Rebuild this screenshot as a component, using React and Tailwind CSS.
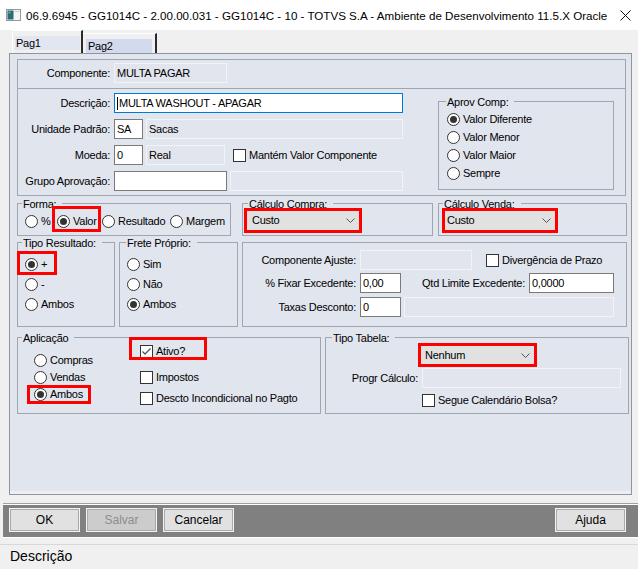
import React from "react";

function Radio({ checked }) {
  return (
    <span className="flex h-[13px] w-[13px] shrink-0 items-center justify-center rounded-full border border-[#333333] bg-white">
      {checked && <span className="h-[7px] w-[7px] rounded-full bg-[#333333]" />}
    </span>
  );
}

function Check({ checked }) {
  return (
    <span className="flex h-[13px] w-[13px] shrink-0 items-center justify-center border border-[#333333] bg-white">
      {checked && (
        <svg width="11" height="11" viewBox="0 0 11 11">
          <polyline points="1.5,5.5 4,8 9.5,2.5" fill="none" stroke="#555555" strokeWidth="1.3" />
        </svg>
      )}
    </span>
  );
}

function RO({ className = "", children }) {
  return (
    <div className={`flex h-[20px] shrink-0 items-center border border-[#f2f3f6] bg-[#e2e5ed] pl-[2px] ${className}`}>
      {children}
    </div>
  );
}

function TF({ className = "", children, focus }) {
  return (
    <div
      className={`flex h-[20px] shrink-0 items-center bg-white pl-[2px] ${
        focus ? "border border-[#0078d7]" : "border border-[#7a7a7a]"
      } ${className}`}
    >
      {children}
    </div>
  );
}

function Group({ className = "", legend, legendClass = "", children }) {
  return (
    <div className={`relative shrink-0 border border-[#a0a6b0] ${className}`}>
      {legend && (
        <span className={`absolute top-[-6px] whitespace-nowrap bg-[#e1e5ee] pl-[1px] pr-[6px] ${legendClass}`}>
          {legend}
        </span>
      )}
      {children}
    </div>
  );
}

function Red({ className = "" }) {
  return <span className={`pointer-events-none absolute border-[3px] border-[#ff0000] ${className}`} />;
}

function Chevron() {
  return (
    <svg width="9" height="5" viewBox="0 0 9 5">
      <polyline points="0.5,0.5 4.5,4.5 8.5,0.5" fill="none" stroke="#555555" strokeWidth="1" />
    </svg>
  );
}

function Select({ className = "", text }) {
  return (
    <div className={`flex shrink-0 items-center justify-between bg-[#e1e1e1] pr-[4px] ${className}`}>
      <span>{text}</span>
      <Chevron />
    </div>
  );
}

function Opt({ checked, label, className = "" }) {
  return (
    <div className={`flex items-center gap-[3px] ${className}`}>
      <Radio checked={checked} />
      <span className="whitespace-nowrap">{label}</span>
    </div>
  );
}

function ChkOpt({ checked, label, className = "" }) {
  return (
    <div className={`flex items-center gap-[3px] ${className}`}>
      <Check checked={checked} />
      <span className="whitespace-nowrap">{label}</span>
    </div>
  );
}

function Btn({ children, disabled }) {
  return (
    <div className="h-[24px] w-[71px] shrink-0 border border-[#f4f4f4]">
      <div
        className={`flex h-full w-full items-center justify-center border border-[#a9a9a9] text-[12px] tracking-normal ${
          disabled ? "bg-[#cccccc] text-[#8c8c8c]" : "bg-[#e1e1e1] text-black"
        }`}
      >
        {children}
      </div>
    </div>
  );
}

export default function App() {
  return (
    <div className="flex h-[569px] w-[638px] flex-col overflow-hidden bg-[#f0f0f0] font-['Liberation_Sans',Arial,sans-serif] text-[11px] leading-[13px] tracking-[-0.25px] text-black">
      {/* Title bar */}
      <div className="flex h-[30px] shrink-0 items-center bg-white pl-[6px] pr-[7px]">
        <svg width="15" height="12" viewBox="0 0 15 12" className="shrink-0">
          <rect x="0.5" y="0.5" width="14" height="11" fill="#f2f4f5" stroke="#8d9aa6" />
          <rect x="1.5" y="1.5" width="6" height="9" fill="#2d6b73" />
          <rect x="2.5" y="2.5" width="2" height="2" fill="#5bb28e" />
          <rect x="8.5" y="2" width="5" height="1" fill="#c9d1d8" />
        </svg>
        <span className="ml-[5px] whitespace-nowrap text-[11.6px] tracking-normal">
          06.9.6945 - GG1014C - 2.00.00.031 - GG1014C - 10 - TOTVS S.A - Ambiente de Desenvolvimento 11.5.X Oracle
        </span>
        <svg width="11" height="11" viewBox="0 0 11 11" className="ml-auto shrink-0">
          <path d="M0.5 0.5 L10.5 10.5 M10.5 0.5 L0.5 10.5" stroke="#111111" strokeWidth="1" />
        </svg>
      </div>

      {/* Tabs */}
      <div className="flex h-[23px] shrink-0 items-end pl-[12px]">
        <div className="h-[23px] w-[71px] border-l border-t border-r-2 border-l-white border-t-white border-r-[#2b2b2b] bg-[#f0f0f0]">
          <div className="ml-[2px] mt-[5px] h-[14px] w-[65px] bg-[#e2e6f0] pl-[1px] leading-[14px]">Pag1</div>
        </div>
        <div className="h-[20px] w-[74px] border-t border-r-2 border-t-white border-r-[#2b2b2b] bg-[#f0f0f0]">
          <div className="ml-[3px] mt-[5px] h-[14px] w-[66px] bg-[#d3daee] pl-[2px] leading-[14px]">Pag2</div>
        </div>
      </div>

      {/* Panel */}
      <div className="ml-[9px] flex h-[442px] w-[623px] shrink-0 flex-col border border-[#8f96a1] bg-[#e1e5ee] pl-[7px] pt-[5px]">
        {/* Box A */}
        <div className="flex h-[137px] w-[609px] shrink-0 flex-col border border-[#a0a6b0]">
          <div className="h-[29px] shrink-0 border-b border-[#a0a6b0] pt-[3px]">
            <div className="flex h-[20px] items-center">
              <span className="w-[92px] shrink-0 text-right">Componente:</span>
              <RO className="ml-[4px] w-[113px]">MULTA PAGAR</RO>
            </div>
          </div>
          <div className="flex pt-[4px]">
            <div className="flex w-[385px] shrink-0 flex-col gap-[6px]">
              <div className="flex h-[20px] items-center">
                <span className="w-[92px] shrink-0 text-right">Descrição:</span>
                <TF focus className="ml-[4px] w-[289px]">
                  <span className="mr-[1px] h-[13px] w-[1px] bg-black" />
                  MULTA WASHOUT - APAGAR
                </TF>
              </div>
              <div className="flex h-[20px] items-center">
                <span className="w-[92px] shrink-0 text-right">Unidade Padrão:</span>
                <TF className="ml-[4px] w-[29px]">SA</TF>
                <RO className="ml-[3px] w-[257px]">Sacas</RO>
              </div>
              <div className="flex h-[20px] items-center">
                <span className="w-[92px] shrink-0 text-right">Moeda:</span>
                <TF className="ml-[4px] w-[29px]">0</TF>
                <RO className="ml-[3px] w-[79px]">Real</RO>
                <ChkOpt className="ml-[8px]" label="Mantém Valor Componente" />
              </div>
              <div className="flex h-[20px] items-center">
                <span className="w-[92px] shrink-0 text-right">Grupo Aprovação:</span>
                <TF className="ml-[4px] w-[113px]" />
                <RO className="ml-[3px] w-[173px]" />
              </div>
            </div>
            <Group
              className="ml-[35px] mt-[8px] h-[89px] w-[176px] pl-[8px] pt-[8px]"
              legend="Aprov Comp:"
              legendClass="left-[7px]"
            >
              <div className="flex flex-col">
                <Opt className="h-[18px]" checked label="Valor Diferente" />
                <Opt className="h-[18px]" label="Valor Menor" />
                <Opt className="h-[18px]" label="Valor Maior" />
                <Opt className="h-[18px]" label="Sempre" />
              </div>
            </Group>
          </div>
        </div>

        {/* Row 2 */}
        <div className="mt-[7px] flex h-[33px] shrink-0">
          <Group className="h-[33px] w-[214px] pl-[7px] pt-[9px]" legend="Forma:" legendClass="left-[4px]">
            <div className="flex h-[16px] items-center">
              <Opt className="w-[32px] shrink-0" label="%" />
              <Opt className="w-[45px] shrink-0" checked label="Valor" />
              <Opt className="w-[68px] shrink-0" label="Resultado" />
              <Opt className="shrink-0" label="Margem" />
            </div>
            <Red className="left-[34px] top-[2px] h-[26px] w-[49px]" />
          </Group>
          <Group
            className="ml-[11px] h-[33px] w-[191px] pl-[4px] pt-[7px]"
            legend="Cálculo Compra:"
            legendClass="left-[5px]"
          >
            <Select className="h-[19px] w-[112px] pl-[5px]" text="Custo" />
            <Red className="left-[1px] top-[4px] h-[25px] w-[118px]" />
          </Group>
          <Group
            className="ml-[5px] h-[33px] w-[189px] pl-[6px] pt-[7px]"
            legend="Cálculo Venda:"
            legendClass="left-[4px]"
          >
            <Select className="h-[19px] w-[110px] pl-[2px]" text="Custo" />
            <Red className="left-[3px] top-[4px] h-[25px] w-[116px]" />
          </Group>
        </div>

        {/* Row 3 */}
        <div className="mt-[6px] flex h-[85px] shrink-0">
          <Group className="h-[85px] w-[98px] pl-[7px] pt-[11px]" legend="Tipo Resultado:" legendClass="left-[4px]">
            <Opt className="h-[20px]" checked label="+" />
            <Opt className="h-[20px]" label="-" />
            <Opt className="h-[20px]" label="Ambos" />
            <Red className="left-[-1px] top-[8px] h-[24px] w-[40px]" />
          </Group>
          <Group
            className="ml-[4px] h-[85px] w-[119px] pl-[7px] pt-[11px]"
            legend="Frete Próprio:"
            legendClass="left-[6px]"
          >
            <Opt className="h-[20px]" label="Sim" />
            <Opt className="h-[20px]" label="Não" />
            <Opt className="h-[20px]" checked label="Ambos" />
          </Group>
          <Group className="ml-[4px] h-[85px] w-[385px] pt-[7px]">
            <div className="flex h-[20px] items-center">
              <span className="w-[113px] shrink-0 text-right">Componente Ajuste:</span>
              <RO className="ml-[4px] w-[112px]" />
              <ChkOpt className="ml-[14px]" label="Divergência de Prazo" />
            </div>
            <div className="mt-[3px] flex h-[20px] items-center">
              <span className="w-[113px] shrink-0 text-right">% Fixar Excedente:</span>
              <TF className="ml-[4px] w-[41px]">0,00</TF>
              <span className="w-[124px] shrink-0 text-right">Qtd Limite Excedente:</span>
              <TF className="ml-[4px] w-[85px]">0,0000</TF>
            </div>
            <div className="mt-[4px] flex h-[20px] items-center">
              <span className="w-[113px] shrink-0 text-right">Taxas Desconto:</span>
              <TF className="ml-[4px] w-[41px]">0</TF>
              <RO className="ml-[3px] w-[210px]" />
            </div>
          </Group>
        </div>

        {/* Row 4 */}
        <div className="mt-[10px] flex h-[77px] shrink-0">
          <Group className="flex h-[77px] w-[304px]" legend="Aplicação" legendClass="left-[4px]">
            <div className="ml-[16px] w-[106px] shrink-0 pt-[14px]">
              <Opt className="h-[17px]" label="Compras" />
              <Opt className="h-[17px]" label="Vendas" />
              <Opt className="h-[17px]" checked label="Ambos" />
            </div>
            <div className="pt-[5px]">
              <ChkOpt className="h-[17px]" checked label="Ativo?" />
              <ChkOpt className="mt-[9px] h-[17px]" label="Impostos" />
              <ChkOpt className="mt-[4px] h-[17px]" label="Descto Incondicional no Pagto" />
            </div>
            <Red className="left-[9px] top-[47px] h-[19px] w-[64px]" />
            <Red className="left-[111px] top-[-1px] h-[23px] w-[78px]" />
          </Group>
          <Group className="ml-[4px] h-[77px] w-[304px] pt-[8px]" legend="Tipo Tabela:" legendClass="left-[6px]">
            <div className="pl-[95px]">
              <Select className="h-[18px] w-[113px] pl-[4px]" text="Nenhum" />
            </div>
            <div className="mt-[4px] flex h-[20px] items-center">
              <span className="w-[92px] shrink-0 text-right">Progr Cálculo:</span>
              <RO className="ml-[4px] w-[199px]" />
            </div>
            <ChkOpt className="ml-[96px] mt-[6px] h-[13px]" label="Segue Calendário Bolsa?" />
            <Red className="left-[92px] top-[5px] h-[24px] w-[119px]" />
          </Group>
        </div>

        <div className="-ml-[7px] mt-auto h-[3px] w-[621px] shrink-0 bg-[#eceef2]" />
      </div>

      {/* Button bar */}
      <div className="ml-[3px] mt-[8px] w-[635px] shrink-0 border-t border-[#a0a0a0]">
        <div className="border-t border-white">
          <div className="flex h-[32px] items-start bg-[#808080] pl-[6px] pr-[12px] pt-[3px]">
            <Btn>OK</Btn>
            <div className="ml-[6px]">
              <Btn disabled>Salvar</Btn>
            </div>
            <div className="ml-[6px]">
              <Btn>Cancelar</Btn>
            </div>
            <div className="ml-auto">
              <Btn>Ajuda</Btn>
            </div>
          </div>
        </div>
        <div className="h-[1px] bg-white" />
      </div>

      {/* Status bar */}
      <div className="mt-[6px] h-[1px] w-full shrink-0 bg-[#d8d8d8]" />
      <div className="mt-[3px] pl-[10px] text-[14px] leading-[16px] tracking-normal">Descrição</div>
    </div>
  );
}
